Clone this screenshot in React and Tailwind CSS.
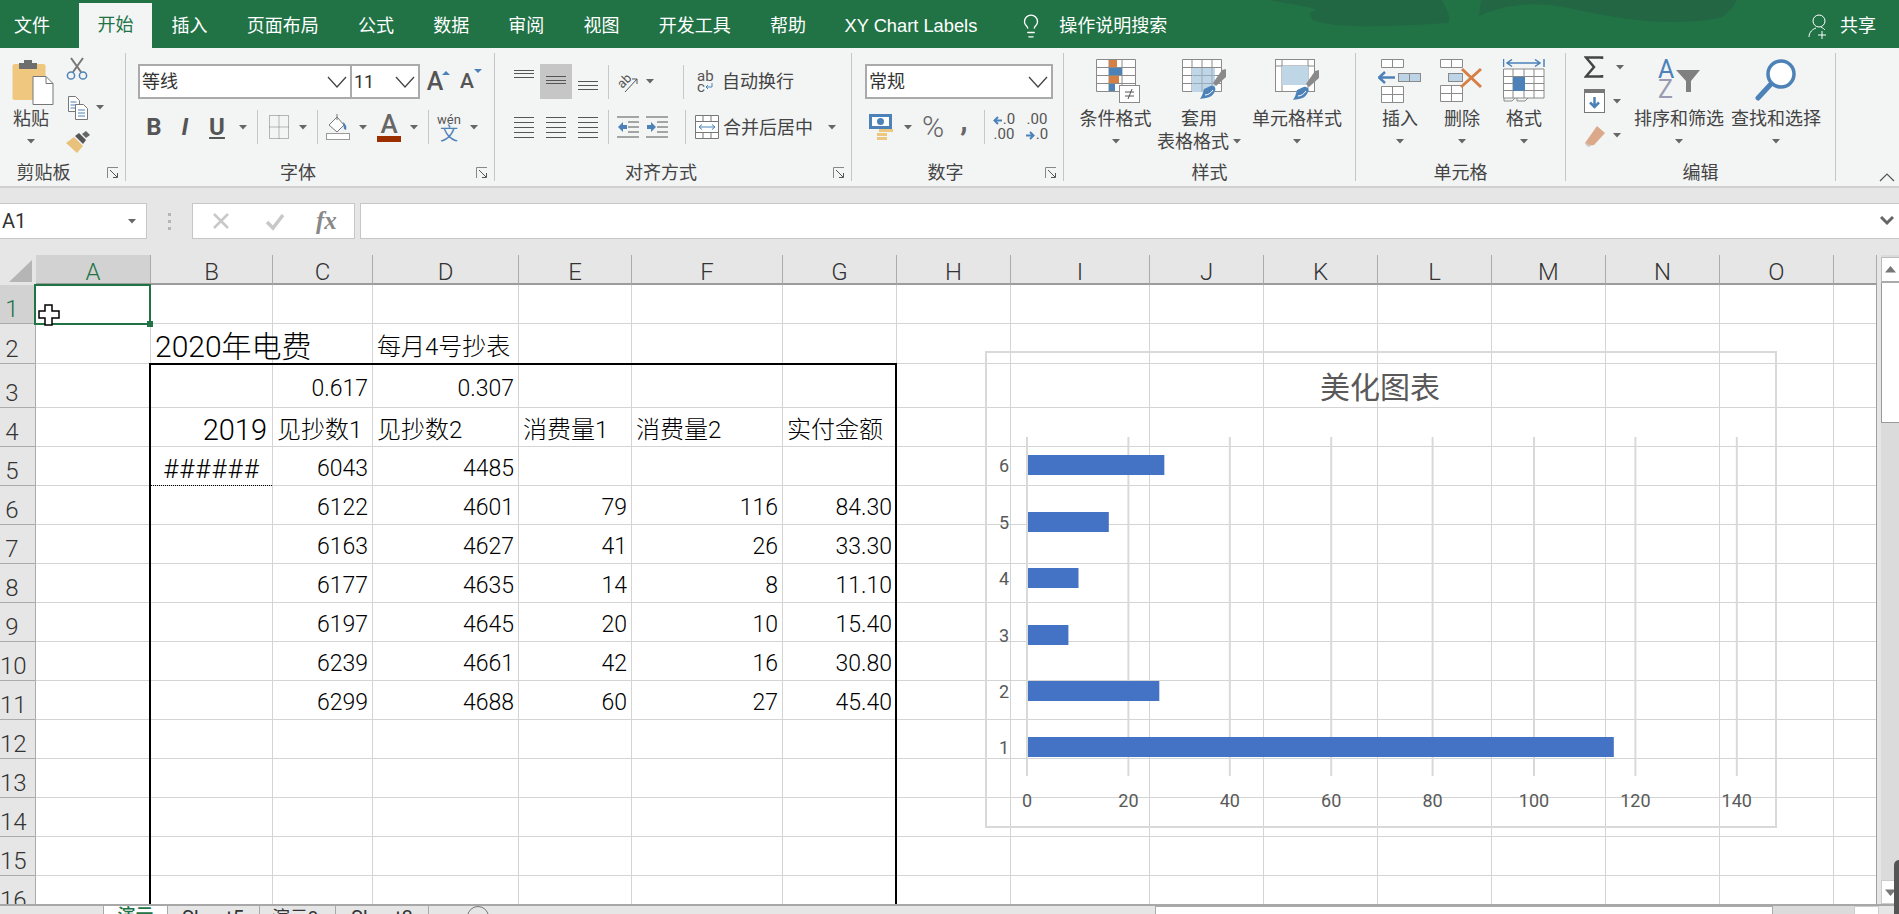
import { Lightbulb } from 'lucide-react';

const blue = '#4d82b8';
const line = '#8a8a8a';

const cols = [
  { label: 'A', w: 'w-[115px]' },
  { label: 'B', w: 'w-[122px]' },
  { label: 'C', w: 'w-[100px]' },
  { label: 'D', w: 'w-[146px]' },
  { label: 'E', w: 'w-[113px]' },
  { label: 'F', w: 'w-[151px]' },
  { label: 'G', w: 'w-[114px]' },
  { label: 'H', w: 'w-[114px]' },
  { label: 'I', w: 'w-[139px]' },
  { label: 'J', w: 'w-[114px]' },
  { label: 'K', w: 'w-[114px]' },
  { label: 'L', w: 'w-[114px]' },
  { label: 'M', w: 'w-[114px]' },
  { label: 'N', w: 'w-[114px]' },
  { label: 'O', w: 'w-[114px]' },
  { label: '', w: 'w-[43px]' },
];

const rows = [
  { h: 'h-[39px]', cells: {} },
  { h: 'h-[40px]', cells: { B: ['2020年电费', 'title'], D: ['每月4号抄表', 'left'] } },
  { h: 'h-[44px]', cells: { C: ['0.617'], D: ['0.307'] } },
  { h: 'h-[39px]', cells: { B: ['2019', 'big'], C: ['见抄数1', 'left'], D: ['见抄数2', 'left'], E: ['消费量1', 'left'], F: ['消费量2', 'left'], G: ['实付金额', 'left'] } },
  { h: 'h-[39px]', cells: { B: ['######', 'hash'], C: ['6043'], D: ['4485'] } },
  { h: 'h-[39px]', cells: { C: ['6122'], D: ['4601'], E: ['79'], F: ['116'], G: ['84.30'] } },
  { h: 'h-[39px]', cells: { C: ['6163'], D: ['4627'], E: ['41'], F: ['26'], G: ['33.30'] } },
  { h: 'h-[39px]', cells: { C: ['6177'], D: ['4635'], E: ['14'], F: ['8'], G: ['11.10'] } },
  { h: 'h-[39px]', cells: { C: ['6197'], D: ['4645'], E: ['20'], F: ['10'], G: ['15.40'] } },
  { h: 'h-[39px]', cells: { C: ['6239'], D: ['4661'], E: ['42'], F: ['16'], G: ['30.80'] } },
  { h: 'h-[39px]', cells: { C: ['6299'], D: ['4688'], E: ['60'], F: ['27'], G: ['45.40'] } },
  { h: 'h-[39px]', cells: {} },
  { h: 'h-[39px]', cells: {} },
  { h: 'h-[39px]', cells: {} },
  { h: 'h-[39px]', cells: {} },
  { h: 'h-[39px]', cells: {} },
];

const cellStyles = {
  title: 'relative z-[1] justify-start pl-[4px] text-[30px]',
  big: 'justify-end pr-[5px] text-[29px]',
  hash: 'justify-center text-[26px] tracking-[1px]',
  left: 'justify-start pl-[4px] text-[24px]',
};

function Caret({ className = '' }) {
  return (
    <svg width="8" height="5" viewBox="0 0 8 5" className={`shrink-0 ${className}`}>
      <path d="M0 0h8L4 4.5z" fill="#666" />
    </svg>
  );
}

function Chevron() {
  return (
    <svg width="20" height="12" viewBox="0 0 20 12" className="shrink-0">
      <path d="M1 1l9 10 9-10" fill="none" stroke="#444" strokeWidth="1.3" />
    </svg>
  );
}

function Sep() {
  return <div className="w-px h-[34px] bg-[#c8c8c8] shrink-0"></div>;
}

function Launcher() {
  return (
    <svg width="12" height="12" viewBox="0 0 12 12">
      <path d="M.5 11V.5H11" fill="none" stroke="#888" />
      <path d="M3 3l7 7M6 10.5h4.5V6" fill="none" stroke="#555" />
    </svg>
  );
}

function Group({ w, label, launcher, labelClass = '', children }) {
  return (
    <div className={`${w} h-[128px] shrink-0 flex flex-col border-r border-[#c6c6c6]`}>
      <div className="h-[112px] relative">{children}</div>
      <div className="flex h-[16px] items-center">
        <div className={`flex-1 text-center text-[18px] leading-[24px] text-[#444] ${labelClass}`}>{label}</div>
        {launcher && <div className="w-[24px] flex justify-center"><Launcher /></div>}
      </div>
    </div>
  );
}

function BigButton({ w, icon, lines, caretInline, iconClass = '' }) {
  return (
    <div className={`${w} shrink-0 flex flex-col items-center`}>
      <div className={`h-[54px] pt-[6px] flex justify-center ${iconClass}`}>{icon}</div>
      <div className="text-[18px] leading-[23px] text-[#444] whitespace-nowrap">{lines[0]}</div>
      {lines[1] ? (
        <div className="text-[18px] leading-[23px] text-[#444] whitespace-nowrap flex items-center gap-[4px]">
          {lines[1]}
          {caretInline && <Caret />}
        </div>
      ) : (
        <div className="h-[23px] flex items-center"><Caret /></div>
      )}
    </div>
  );
}

/* ribbon icons */
function PasteIcon() {
  return (
    <svg width="42" height="46" viewBox="0 0 42 46">
      <rect x="0.5" y="5" width="33" height="36" rx="2" fill="#f0c77e" />
      <path d="M7 10V4h5V1h8v3h5v6z" fill="#6e6e6e" />
      <path d="M21 17.5h13l7 7v21H21z" fill="#fff" stroke="#777" />
      <path d="M34 17.5v7h7" fill="none" stroke="#777" />
    </svg>
  );
}
function CutIcon() {
  return (
    <svg width="22" height="24" viewBox="0 0 22 24">
      <path d="M5 1l10 14M17 1L7 15" stroke="#777" strokeWidth="2" fill="none" />
      <circle cx="5" cy="18.5" r="3.6" fill="none" stroke={blue} strokeWidth="1.5" />
      <circle cx="17" cy="18.5" r="3.6" fill="none" stroke={blue} strokeWidth="1.5" />
    </svg>
  );
}
function CopyIcon() {
  return (
    <svg width="20" height="24" viewBox="0 0 20 24">
      <path d="M.5.5h7l4 4v11H.5z" fill="#fff" stroke="#777" />
      <path d="M2.5 6h6M2.5 9h6M2.5 12h6" stroke={blue} />
      <path d="M7.5 8.5h8l4 4v11h-12z" fill="#fff" stroke="#777" />
      <path d="M10 14h7M10 17h7M10 20h7" stroke={blue} />
    </svg>
  );
}
function BrushIcon() {
  return (
    <svg width="24" height="22" viewBox="0 0 24 22">
      <path d="M0 12l8-6 9 9-6 7z" fill="#e8c27a" />
      <path d="M9 5l4-3 7 7-3 4z" fill="#555" />
      <path d="M16 3l4-3 4 4-4 3z" fill="#666" />
    </svg>
  );
}
function BorderIcon() {
  return (
    <svg width="20" height="24" viewBox="0 0 20 24">
      <path d="M.5.5h19v23H.5zM10 .5v23M.5 12h19" fill="none" stroke="#777" strokeDasharray="1 1" />
    </svg>
  );
}
function FillIcon() {
  return (
    <svg width="24" height="26" viewBox="0 0 24 26">
      <path d="M3 11L11 3l7 8-7 7z" fill="#fff" stroke="#777" />
      <path d="M11 0v6" stroke="#777" />
      <path d="M17 8c3 2 4 5 3 8l-2-1z" fill={blue} />
      <rect x="0.5" y="19.5" width="23" height="6" fill="#fff" stroke="#999" />
    </svg>
  );
}
function WenIcon() {
  return (
    <div className="flex flex-col items-center text-[13px] leading-[13px] text-[#555]">
      <span>wén</span>
      <span className="text-[18px] leading-[16px] text-[#4d82b8]">文</span>
    </div>
  );
}
function AlignLines({ ys }) {
  return (
    <svg width="20" height="35" viewBox="0 0 20 35">
      {ys.map((y) => (
        <rect key={y} x="0" y={y} width="20" height="1" fill="#555" />
      ))}
    </svg>
  );
}
function OrientIcon() {
  return (
    <svg width="22" height="24" viewBox="0 0 22 24">
      <text x="1" y="15" fontSize="13" fill="#555" transform="rotate(-45 8 12)">ab</text>
      <path d="M8 22L20 9M15 9h5v5" fill="none" stroke="#555" />
    </svg>
  );
}
function IndentIcon({ dir }) {
  const arrow = dir === 'out' ? 'M1 12l5-5v3h4v4H6v3z' : 'M10 12L5 7v3H1v4h4v3z';
  return (
    <svg width="22" height="24" viewBox="0 0 22 24">
      <path d="M0 2h22M11 7h11M11 12h11M11 17h11M0 22h22" stroke="#555" />
      <path d={arrow} fill={blue} />
    </svg>
  );
}
function WrapIcon() {
  return (
    <div className="w-[18px] flex flex-col text-[15px] leading-[11px] text-[#555]">
      <span>ab</span>
      <span className="flex items-center">c<svg width="8" height="8" viewBox="0 0 8 8"><path d="M7 0v4H1M3 2L1 4l2 2" fill="none" stroke={blue} /></svg></span>
    </div>
  );
}
function MergeIcon() {
  return (
    <svg width="24" height="24" viewBox="0 0 24 24">
      <path d="M.5.5h23v23H.5zM.5 6.5h23M.5 17.5h23M8 .5v6M16 .5v6M8 17.5v6M16 17.5v6" fill="#fff" stroke="#777" />
      <path d="M4 12h16M7 9.5L4 12l3 2.5M17 9.5l3 2.5-3 2.5" fill="none" stroke={blue} />
    </svg>
  );
}
function MoneyIcon() {
  return (
    <svg width="24" height="28" viewBox="0 0 24 28">
      <rect x="0" y="1" width="23" height="15" fill={blue} />
      <rect x="3" y="4" width="17" height="9" fill="#fff" />
      <circle cx="11.5" cy="8.5" r="3.5" fill={blue} />
      <rect x="10" y="16" width="14" height="3" fill="#eec77f" />
      <rect x="8" y="20" width="10" height="3" fill="#eec77f" />
      <rect x="8" y="24" width="10" height="3" fill="#eec77f" />
    </svg>
  );
}
function DecArrow({ dir }) {
  return (
    <svg width="9" height="9" viewBox="0 0 9 9" className="inline-block mr-[1px]">
      <path d={dir === 'left' ? 'M9 4.500H2M5 1L1.500 4.500 5 8' : 'M0 4.500h7M4 1l3.500 3.500L4 8'} fill="none" stroke={blue} strokeWidth="2" />
    </svg>
  );
}
function GridBase() {
  return (
    <path d="M.5.5h39v32H.5zM.5 8.500h39M.5 16.500h39M.5 24.500h39M13 .5v32M26 .5v32" fill="#fff" stroke={line} />
  );
}
function CondIcon() {
  return (
    <svg width="44" height="44" viewBox="0 0 44 44">
      <GridBase />
      <rect x="13" y="1" width="8" height="7" fill="#d57f45" />
      <rect x="13" y="9" width="13" height="7" fill={blue} />
      <rect x="13" y="17" width="10" height="7" fill="#d57f45" />
      <rect x="13" y="25" width="6" height="7" fill={blue} />
      <rect x="23.500" y="26.500" width="20" height="17" fill="#fff" stroke={line} />
      <path d="M29 33h9M29 37h9M36 30l-4 10" stroke="#555" fill="none" />
    </svg>
  );
}
function Swoosh() {
  return (
    <>
      <path d="M31 24l9-13 4-1v8l-10 9z" fill="#8a8a8a" />
      <path d="M22 30c4-1 6-4 9-3 3 1 3 4 1 7-2 4-7 5-14 6 2-3 3-6 4-10z" fill={blue} />
      <path d="M23 36c3 0 6-2 8-5" stroke="#fff" fill="none" />
    </>
  );
}
function TableIcon() {
  return (
    <svg width="44" height="42" viewBox="0 0 44 42">
      <path d="M.5.5h39v32H.5zM.5 8.500h39M.5 16.500h39M.5 24.500h39M10 .5v32M20 .5v32M30 .5v32" fill="#fff" stroke={line} />
      <rect x="10" y="9" width="23" height="24" fill="#bfd6e6" />
      <path d="M10.500 16.500h23M10.500 24.500h23M20 9v24M30 9v24" stroke="#9ab" />
      <Swoosh />
    </svg>
  );
}
function CellStyleIcon() {
  return (
    <svg width="44" height="44" viewBox="0 0 44 44">
      <rect x="0.5" y="0.5" width="39" height="32" fill="#fff" stroke={line} />
      <path d="M.5 7h39M7 .5V32M33 .5V32" stroke={line} fill="none" />
      <rect x="7" y="7" width="26" height="19" fill="#bfd6e6" />
      <g transform="translate(0 1)"><Swoosh /></g>
    </svg>
  );
}
function InsertIcon() {
  return (
    <svg width="44" height="44" viewBox="0 0 44 44">
      <path d="M3.500.5h22v8h-22zM14.500.5v8M3.500 27.500h22v16h-22zM3.500 35.500h22M14.500 27.500v16" fill="#fff" stroke={line} />
      <rect x="20.500" y="14.500" width="22" height="8" fill="#bcd4e6" stroke={line} />
      <path d="M31.500 14.500v8" stroke={line} />
      <path d="M1 18.500h16M7 13l-6 5.500L7 24" fill="none" stroke={blue} strokeWidth="2.500" />
    </svg>
  );
}
function DeleteIcon() {
  return (
    <svg width="44" height="44" viewBox="0 0 44 44">
      <path d="M.5.5h22v8H.5zM11.500.5v8M.5 26.500h22v16H.5zM.5 34.500h22M11.500 26.500v16" fill="#fff" stroke={line} />
      <rect x="8.500" y="14.500" width="14" height="8" fill="#bcd4e6" stroke={line} />
      <path d="M22 10l19 18M41 10L21 28" stroke="#d57f45" strokeWidth="3" fill="none" />
    </svg>
  );
}
function FormatIcon() {
  return (
    <svg width="42" height="44" viewBox="0 0 42 44">
      <path d="M.5 0v8M41 0v8M4 4h33M9 .5L4 4l5 3.500M32 .5L37 4l-5 3.500" fill="none" stroke={blue} strokeWidth="1.500" />
      <path d="M.5 10h40.500v29H.5zM.5 17.500H41M.5 24.500H41M.5 31.500H41M10 10v29M21 10v29M31 10v29" fill="#fff" stroke={line} />
      <rect x="10" y="18" width="12" height="14" fill={blue} />
      <path d="M1 39v3h8l3-3M14 39v3h8l3-3" fill="none" stroke={line} />
    </svg>
  );
}
function SumIcon() {
  return (
    <svg width="20" height="22" viewBox="0 0 20 22">
      <path d="M18 3V1.500H2L10 11 2 20.500h16V19" fill="none" stroke="#444" strokeWidth="2.500" />
    </svg>
  );
}
function FillDownIcon() {
  return (
    <svg width="22" height="24" viewBox="0 0 22 24">
      <rect x="0.5" y="0.5" width="20" height="23" fill="#fff" stroke="#777" />
      <rect x="0" y="0" width="21" height="4" fill="#777" />
      <path d="M10.500 8v10M6 13.500l4.500 4.500 4.500-4.500" fill="none" stroke={blue} strokeWidth="2.500" />
    </svg>
  );
}
function EraserIcon() {
  return (
    <svg width="22" height="22" viewBox="0 0 22 22">
      <path d="M13 1l8 7L10 20l-7 1-2-3z" fill="#dca88a" />
      <path d="M1 17l6 4-3 1z" fill="#c9c9c9" />
    </svg>
  );
}
function SortIcon() {
  return (
    <svg width="44" height="40" viewBox="0 0 44 40">
      <text x="1" y="19" fontSize="25" fill={blue} fontFamily="Roboto, sans-serif">A</text>
      <text x="1" y="39" fontSize="25" fill="#9a9ab0" fontFamily="Roboto, sans-serif">Z</text>
      <path d="M19 11h24l-9 11v11h-5V22z" fill="#808080" />
    </svg>
  );
}
function FindIcon() {
  return (
    <svg width="42" height="42" viewBox="0 0 42 42">
      <circle cx="26" cy="15" r="13" fill="#fff" stroke={blue} strokeWidth="3.500" />
      <path d="M16 25L3 39" stroke={blue} strokeWidth="5" strokeLinecap="round" />
    </svg>
  );
}

function ColorA() {
  return (
    <div className="flex flex-col items-center leading-none">
      <span className="text-[26px] leading-[22px] font-medium text-[#666]">A</span>
      <div className="w-[24px] h-[6px] mt-[1px] bg-[#9c2f00]"></div>
    </div>
  );
}

function SelectBox({ w, text }) {
  return (
    <div className={`${w} h-[35px] bg-white border-2 border-[#aaa] flex items-center justify-between pr-[3px] pl-[2px] shrink-0`}>
      <span className="text-[18px] text-[#333]">{text}</span>
      <Chevron />
    </div>
  );
}

function Ribbon() {
  const top = [6, 9, 13];
  const mid = [12, 16, 19];
  const bot = [17, 21, 25];
  const five = [7, 12, 17, 22, 27];
  return (
    <div className="h-[140px] shrink-0 bg-[#f3f4f4] border-b-2 border-[#d0d0d0] flex pt-[5px]">
      <Group w="w-[126px]" label="剪贴板" launcher labelClass="pr-[14px]">
        <div className="flex h-full">
          <div className="w-[62px] shrink-0">
            <BigButton w="w-[62px]" icon={<PasteIcon />} lines={['粘贴']} iconClass="pl-[3px]" />
          </div>
          <div className="flex flex-col">
            <div className="h-[30px] pl-[4px] pt-[4px]"><CutIcon /></div>
            <div className="h-[40px] pl-[6px] pt-[9px] flex items-center gap-[8px]"><CopyIcon /><Caret /></div>
            <div className="pl-[4px] pt-[8px]"><BrushIcon /></div>
          </div>
        </div>
      </Group>
      <Group w="w-[369px]" label="字体" launcher>
        <div className="pt-[11px] pl-[12px]">
          <div className="flex items-center h-[35px]">
            <SelectBox w="w-[214px]" text="等线" />
            <SelectBox w="w-[70px] -ml-[2px]" text="11" />
            <div className="relative w-[28px] ml-[1px] text-center text-[25px] leading-none font-medium text-[#555]">
              A
              <div className="absolute right-[-1px] top-[2px] w-0 h-0 border-x-[4px] border-x-transparent border-b-[4px] border-b-[#4d82b8]"></div>
            </div>
            <div className="relative w-[24px] ml-[6px] text-center text-[21px] leading-none font-medium text-[#555]">
              A
              <div className="absolute right-[-3px] top-[-2px] w-0 h-0 border-x-[4px] border-x-transparent border-t-[4px] border-t-[#4d82b8]"></div>
            </div>
          </div>
          <div className="flex items-center h-[36px] mt-[10px] text-[#555]">
            <div className="w-[32px] text-center text-[24px] font-bold">B</div>
            <div className="w-[30px] text-center text-[24px] font-bold italic">I</div>
            <div className="w-[34px] text-center text-[24px] font-bold underline">U</div>
            <div className="w-[18px] flex justify-center"><Caret /></div>
            <div className="ml-[5px]"><Sep /></div>
            <div className="w-[41px] flex justify-center"><BorderIcon /></div>
            <Caret />
            <div className="ml-[10px]"><Sep /></div>
            <div className="w-[40px] flex justify-center"><FillIcon /></div>
            <div className="w-[10px] flex justify-center"><Caret /></div>
            <div className="w-[42px] flex justify-center"><ColorA /></div>
            <Caret />
            <div className="ml-[10px]"><Sep /></div>
            <div className="w-[40px] flex justify-center"><WenIcon /></div>
            <div className="w-[10px] flex justify-center"><Caret /></div>
          </div>
        </div>
      </Group>
      <Group w="w-[357px]" label="对齐方式" launcher>
        <div className="pt-[11px] pl-[13px]">
          <div className="flex items-center h-[35px]">
            <div className="w-[32px] flex justify-center"><AlignLines ys={top} /></div>
            <div className="w-[32px] h-[35px] bg-[#c6c6c6] flex justify-center"><AlignLines ys={mid} /></div>
            <div className="w-[32px] flex justify-center"><AlignLines ys={bot} /></div>
            <div className="ml-[4px]"><Sep /></div>
            <div className="w-[37px] flex justify-center"><OrientIcon /></div>
            <Caret />
            <div className="ml-[29px]"><Sep /></div>
            <div className="ml-[13px] w-[18px] mr-[7px]"><WrapIcon /></div>
            <span className="text-[18px] text-[#444]">自动换行</span>
          </div>
          <div className="flex items-center h-[36px] mt-[10px]">
            <div className="w-[32px] flex justify-center"><AlignLines ys={five} /></div>
            <div className="w-[32px] flex justify-center"><AlignLines ys={five} /></div>
            <div className="w-[32px] flex justify-center"><AlignLines ys={five} /></div>
            <div className="ml-[4px]"><Sep /></div>
            <div className="w-[37px] flex justify-center"><IndentIcon dir="out" /></div>
            <div className="w-[32px] flex justify-center -ml-[5px]"><IndentIcon dir="in" /></div>
            <div className="ml-[12px]"><Sep /></div>
            <div className="ml-[9px] mr-[4px]"><MergeIcon /></div>
            <span className="text-[18px] text-[#444]">合并后居中</span>
            <Caret className="ml-[15px]" />
          </div>
        </div>
      </Group>
      <Group w="w-[212px]" label="数字" launcher>
        <div className="pt-[11px] pl-[13px]">
          <SelectBox w="w-[188px]" text="常规" />
          <div className="flex items-center h-[36px] mt-[10px]">
            <div className="w-[30px] pl-[2px] flex justify-center"><MoneyIcon /></div>
            <Caret className="ml-[9px]" />
            <div className="w-[42px] text-center text-[30px] font-light leading-[36px] text-[#666]">%</div>
            <div className="w-[20px] text-center text-[30px] font-bold text-[#666] leading-[20px] -mt-[12px]">,</div>
            <div className="ml-[10px]"><Sep /></div>
            <div className="w-[38px] text-[15px] leading-[15px] text-[#555] text-center">
              <div><DecArrow dir="left" />.0</div>
              <div>.00</div>
            </div>
            <div className="w-[28px] text-[15px] leading-[15px] text-[#555] text-center">
              <div>.00</div>
              <div><DecArrow dir="right" />.0</div>
            </div>
          </div>
        </div>
      </Group>
      <Group w="w-[292px]" label="样式">
        <div className="flex pl-[17px]">
          <BigButton w="w-[69px]" icon={<CondIcon />} lines={['条件格式']} iconClass="pl-[5px]" />
          <BigButton w="w-[98px]" icon={<TableIcon />} lines={['套用', '表格格式']} caretInline iconClass="pl-[9px]" />
          <BigButton w="w-[98px]" icon={<CellStyleIcon />} lines={['单元格样式']} />
        </div>
      </Group>
      <Group w="w-[210px]" label="单元格">
        <div className="flex pl-[13px]">
          <BigButton w="w-[62px]" icon={<InsertIcon />} lines={['插入']} />
          <BigButton w="w-[62px]" icon={<DeleteIcon />} lines={['删除']} />
          <BigButton w="w-[62px]" icon={<FormatIcon />} lines={['格式']} />
        </div>
      </Group>
      <Group w="w-[270px]" label="编辑">
        <div className="flex">
          <div className="w-[68px] shrink-0 -mt-[3px] pl-[18px]">
            <div className="h-[34px] flex items-center gap-[12px]"><SumIcon /><Caret /></div>
            <div className="h-[34px] flex items-center gap-[7px]"><FillDownIcon /><Caret /></div>
            <div className="h-[35px] flex items-center gap-[7px]"><EraserIcon /><Caret /></div>
          </div>
          <BigButton w="w-[90px]" icon={<SortIcon />} lines={['排序和筛选']} />
          <BigButton w="w-[104px]" icon={<FindIcon />} lines={['查找和选择']} />
        </div>
      </Group>
      <div className="flex-1 flex items-end justify-end pr-[4px] pb-[4px]">
        <svg width="16" height="9" viewBox="0 0 16 9"><path d="M1 8l7-7 7 7" fill="none" stroke="#555" strokeWidth="1.200" /></svg>
      </div>
    </div>
  );
}

function TitleBar() {
  const tabs = ['插入', '页面布局', '公式', '数据', '审阅', '视图', '开发工具', '帮助'];
  return (
    <div className="relative h-[48px] shrink-0 bg-[#217346] flex items-end text-white text-[18px] overflow-hidden">
      <svg className="absolute left-[1259px] top-0" width="640" height="48" viewBox="0 0 640 48">
        <path d="M0 0h10c20 4 40 6 48 10-8 2-10 4-4 10 20 8 60 8 135 3 4-6-2-14-6-23z" fill="#226644" opacity="0.9" />
        <path d="M220 16c30-14 60-14 90-8 60 14 110 18 150 10 8-4 14-10 18-18H222z" fill="#226644" />
      </svg>
      <div className="w-[79px] h-[45px] pl-[14px] leading-[45px] relative">文件</div>
      <div className="w-[73px] h-[45px] leading-[44px] text-center bg-[#f3f4f4] text-[#217346] relative">开始</div>
      {tabs.map((t) => (
        <div key={t} className="h-[45px] leading-[45px] px-[19.6px] relative">{t}</div>
      ))}
      <div className="h-[45px] leading-[45px] px-[19px] relative whitespace-nowrap text-[18.3px] font-[family-name:'Liberation_Sans','Noto_Sans_CJK_SC',sans-serif]">XY Chart Labels</div>
      <div className="h-[45px] flex items-center relative ml-[22px]">
        <Lightbulb size={26} strokeWidth={1.2} />
        <span className="ml-[15px]">操作说明搜索</span>
      </div>
      <div className="relative ml-auto mr-[23px] h-[45px] flex items-center gap-[8px]">
        <svg width="24" height="26" viewBox="0 0 24 26">
          <circle cx="11" cy="8" r="6" fill="none" stroke="#fff" />
          <path d="M1 24c0-5 4-8 7-9M18 22h-8M14 18v8M13 14c2 1 3 2 4 3" fill="none" stroke="#fff" />
        </svg>
        <span>共享</span>
      </div>
    </div>
  );
}

function FormulaBar() {
  return (
    <div className="h-[67px] shrink-0 pt-[15px] flex">
      <div className="w-[147px] h-[36px] bg-white border-y border-r border-[#c6c6c6] flex items-center justify-between pl-[2px] pr-[10px] shrink-0">
        <span className="text-[20px] text-[#333]">A1</span>
        <Caret />
      </div>
      <div className="w-[45px] h-[36px] flex items-center justify-center">
        <div className="flex flex-col gap-[4px]">
          <div className="w-[3px] h-[3px] bg-[#b5b5b5]"></div>
          <div className="w-[3px] h-[3px] bg-[#b5b5b5]"></div>
          <div className="w-[3px] h-[3px] bg-[#b5b5b5]"></div>
        </div>
      </div>
      <div className="w-[163px] h-[36px] bg-white border border-[#c6c6c6] flex items-center shrink-0">
        <svg className="ml-[18px]" width="20" height="20" viewBox="0 0 20 20"><path d="M3 3l14 14M17 3L3 17" stroke="#c8c8c8" strokeWidth="2.500" /></svg>
        <svg className="ml-[34px]" width="20" height="20" viewBox="0 0 20 20"><path d="M2 11l6 6L18 4" fill="none" stroke="#c8c8c8" strokeWidth="3.500" /></svg>
        <span className="ml-[31px] text-[25px] italic font-bold text-[#888] font-[family-name:'Liberation_Serif',serif]">fx</span>
      </div>
      <div className="ml-[5px] flex-1 h-[36px] bg-white border-y border-l border-[#c6c6c6] flex items-center justify-end pr-[5px]">
        <svg width="14" height="10" viewBox="0 0 14 10"><path d="M1 1l6 6 6-6" fill="none" stroke="#666" strokeWidth="3" /></svg>
      </div>
    </div>
  );
}

function Chart() {
  const ticks = [0, 20, 40, 60, 80, 100, 120, 140];
  const bars = [
    { n: 6, v: 27, y: 455 },
    { n: 5, v: 16, y: 512 },
    { n: 4, v: 10, y: 568 },
    { n: 3, v: 8, y: 625 },
    { n: 2, v: 26, y: 681 },
    { n: 1, v: 116, y: 737 },
  ];
  return (
    <svg className="absolute left-[985px] top-[96px]" width="792" height="477" viewBox="985 351 792 477">
      <rect x="986" y="352" width="790" height="475" fill="none" stroke="#d9d9d9" strokeWidth="2" />
      <text x="1380" y="398" textAnchor="middle" fontSize="30" fill="#595959">美化图表</text>
      {ticks.map((t) => {
        const x = 1027 + t * 5.07;
        return (
          <g key={t}>
            <rect x={x - 1} y="437" width="2" height="339" fill="#d9d9d9" />
            <text x={x} y="807" textAnchor="middle" fontSize="18" fill="#595959">{t}</text>
          </g>
        );
      })}
      {bars.map((b) => (
        <g key={b.n}>
          <rect x="1028" y={b.y} width={b.v * 5.05} height="20" fill="#4472c4" />
          <text x="1004" y={b.y + 17} textAnchor="middle" fontSize="18" fill="#595959">{b.n}</text>
        </g>
      ))}
    </svg>
  );
}

function Sheet() {
  return (
    <div className="relative h-[649px] shrink-0 flex overflow-hidden">
      <div className="relative w-[1877px] shrink-0 h-full overflow-hidden">
        <div className="flex h-[30px]">
          <div className="w-[36px] h-[30px] flex items-end justify-end pr-[4px] pb-[3px] shrink-0">
            <div className="w-0 h-0 border-l-[23px] border-l-transparent border-b-[22px] border-b-[#b5b5b5]"></div>
          </div>
          {cols.map((c) => (
            <div
              key={c.label}
              className={`${c.w} shrink-0 h-[30px] pt-[6px] border-r border-[#ababab] border-b-2 border-b-[#9c9c9c] flex items-center justify-center text-[24px] font-light ${c.label === 'A' ? 'bg-[#d2d2d2] text-[#217346]' : 'text-[#333]'}`}
            >
              {c.label}
            </div>
          ))}
        </div>
        {rows.map((r, i) => (
          <div key={i} className={`flex ${r.h}`}>
            <div className={`w-[36px] shrink-0 border-r border-b border-[#ababab] flex items-end ${i === 0 ? 'bg-[#d2d2d2] text-[#217346]' : 'bg-[#e6e6e6] text-[#333]'}`}>
              <div className="w-[24px] text-center text-[24px] leading-[27px] font-light">{i + 1}</div>
            </div>
            {cols.map((c) => {
              const cell = r.cells[c.label];
              return (
                <div key={c.label} className={`${c.w} shrink-0 bg-white border-r border-b border-[#d4d4d4] flex items-end font-light text-black whitespace-nowrap ${cell && cell[1] ? cellStyles[cell[1]] : 'justify-end pr-[4px] text-[23px]'}`}>
                  {cell && <span className={`leading-[30px] ${i === 2 ? 'pb-[3px]' : 'pb-[1px]'}`}>{cell[0]}</span>}
                </div>
              );
            })}
          </div>
        ))}
        {/* table outline, selection and chart float over the grid */}
        <div className="absolute z-[2] left-[149px] top-[108px] w-[748px] h-[600px] border-2 border-black"></div>
        <div className="absolute left-[151px] top-[230px] w-[121px] border-b border-dotted border-black"></div>
        <div className="absolute z-[2] left-[34px] top-[29px] w-[117px] h-[41px] border-2 border-[#217346]">
          <div className="absolute right-[-4px] bottom-[-4px] w-[6px] h-[6px] bg-[#217346]"></div>
          <svg className="absolute left-[2px] top-[18px]" width="22" height="22" viewBox="0 0 22 22">
            <path d="M7 1h7v6h7v7h-7v7H7v-7H1V7h6z" fill="#fff" stroke="#000" strokeWidth="1.500" />
          </svg>
        </div>
        <Chart />
        <div className="absolute right-0 top-[28px] bottom-0 w-px bg-[#a0a0a0]"></div>
      </div>
      <div className="w-[4px] bg-[#e6e6e6] shrink-0"></div>
      <div className="w-[18px] shrink-0 h-full flex flex-col bg-[#dbdbdb]">
        <div className="h-[26px] mt-[2px] bg-white border-l border-t border-[#bbb] border-b-2 border-b-[#aaa] flex items-center justify-center">
          <svg width="11" height="7" viewBox="0 0 11 7"><path d="M5.500 0L11 6.500H0z" fill="#777" /></svg>
        </div>
        <div className="h-[140px] bg-white border-l border-b border-[#999]"></div>
        <div className="flex-1"></div>
        <div className="h-[24px] bg-white border border-[#ccc] flex items-center justify-center">
          <svg width="11" height="7" viewBox="0 0 11 7"><path d="M0 .5h11L5.500 7z" fill="#777" /></svg>
        </div>
      </div>
    </div>
  );
}

function SheetTabs() {
  return (
    <div className="h-[10px] shrink-0 bg-[#e6e6e6] border-t-2 border-[#a8a8a8] flex text-[18px] leading-[24px] overflow-hidden">
      <div className="w-[104px] h-[24px] border-r border-[#a8a8a8] shrink-0"></div>
      <div className="w-[63px] h-[24px] -mt-[2px] bg-white text-[#217346] text-center shrink-0 font-medium">演示</div>
      <div className="w-[93px] h-[24px] pl-[14px] border-r border-l border-[#a8a8a8] text-[#333] text-[20px] shrink-0">Sheet5</div>
      <div className="w-[76px] h-[24px] pl-[12px] border-r border-[#a8a8a8] text-[#333] shrink-0">演示2</div>
      <div className="w-[93px] h-[24px] pl-[15px] border-r border-[#a8a8a8] text-[#333] text-[20px] shrink-0">Sheet3</div>
      <div className="ml-[38px] w-[22px] h-[22px] rounded-full border border-[#777] shrink-0"></div>
      <div className="ml-[666px] w-[618px] h-[24px] bg-white border border-[#aaa] shrink-0"></div>
      <div className="w-[81px] h-[24px] bg-[#dbdbdb] shrink-0"></div>
      <div className="w-[25px] h-[24px] bg-white border border-[#ccc] shrink-0"></div>
    </div>
  );
}

export default function App() {
  return (
    <div className="relative w-[1899px] h-[914px] overflow-hidden flex flex-col bg-[#e6e6e6] font-[family-name:Roboto,'Noto_Sans_CJK_SC',sans-serif]">
      <TitleBar />
      <Ribbon />
      <FormulaBar />
      <Sheet />
      <SheetTabs />
      <div className="absolute right-0 bottom-0 w-[5px] h-[54px] rounded-tl-[5px] bg-[#555]"></div>
    </div>
  );
}
